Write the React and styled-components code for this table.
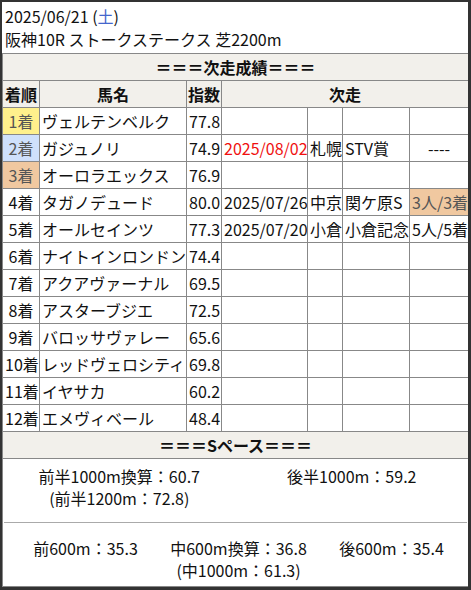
import React from 'react';
import styled, { createGlobalStyle } from 'styled-components';

const Global = createGlobalStyle`
  html, body {
    margin: 0;
    padding: 0;
    background: #333;
  }
  body {
    font-family: "Noto Sans CJK JP", "Noto Sans", sans-serif;
    font-size: 16px;
    color: #111;
  }
`;

const Frame = styled.div`
  padding: 2px 3px 3px 2px;
  width: 471px;
  height: 590px;
  box-sizing: border-box;
`;

const Card = styled.div`
  background: #fff;
  height: 100%;
  overflow: hidden;
`;

const Header = styled.div`
  padding: 3px 3px 2px;
  line-height: 23px;
`;

const Sat = styled.span`
  color: #4466cc;
`;

const Table = styled.table`
  width: 466px;
  border-collapse: collapse;
  table-layout: fixed;
  border: 1px solid #888;
`;

const Cell = styled.td`
  border: 1px solid #888;
  height: 26px;
  padding: 0 2px;
  line-height: 24px;
  white-space: nowrap;
  overflow: hidden;
  text-align: ${p => p.$align || 'left'};
  background: ${p => p.$bg || 'transparent'};
  color: ${p => (p.$red ? '#f01010' : p.$bg ? '#555' : '#111')};
`;

const HeadCell = styled.th`
  border: 1px solid #888;
  height: 26px;
  padding: 0;
  line-height: 24px;
  white-space: nowrap;
  background: #f2f0eb;
  font-weight: 700;
  text-align: center;
`;

const PaceCell = styled.td`
  border: 1px solid #888;
  padding: 0;
  vertical-align: top;
`;

const PaceRow = styled.div`
  display: grid;
  grid-template-columns: repeat(${p => p.$cols}, 1fr);
  line-height: 22px;
  text-align: center;
  padding: ${p => p.$pad};
`;

const Divider = styled.div`
  border-top: 1px solid #aaa;
  margin: 0 1px;
`;

const PLACE_BG = {
  1: '#fff08c',
  2: '#cfe0fb',
  3: '#f0c8a0',
};

const rows = [
  { n: 1, name: 'ヴェルテンベルク', idx: '77.8' },
  { n: 2, name: 'ガジュノリ', idx: '74.9', next: ['2025/08/02', '札幌', 'STV賞', '----'], red: true },
  { n: 3, name: 'オーロラエックス', idx: '76.9' },
  { n: 4, name: 'タガノデュード', idx: '80.0', next: ['2025/07/26', '中京', '関ケ原S', '3人/3着'], resBg: PLACE_BG[3] },
  { n: 5, name: 'オールセインツ', idx: '77.3', next: ['2025/07/20', '小倉', '小倉記念', '5人/5着'] },
  { n: 6, name: 'ナイトインロンドン', idx: '74.4' },
  { n: 7, name: 'アクアヴァーナル', idx: '69.5' },
  { n: 8, name: 'アスターブジエ', idx: '72.5' },
  { n: 9, name: 'バロッサヴァレー', idx: '65.6' },
  { n: 10, name: 'レッドヴェロシティ', idx: '69.8' },
  { n: 11, name: 'イヤサカ', idx: '60.2' },
  { n: 12, name: 'エメヴィベール', idx: '48.4' },
];

const ResultRow = ({ r }) => {
  const next = r.next || ['', '', '', ''];
  return (
    <tr>
      <Cell $align="center" $bg={PLACE_BG[r.n]}>{r.n}着</Cell>
      <Cell>{r.name}</Cell>
      <Cell>{r.idx}</Cell>
      <Cell $red={r.red}>{next[0]}</Cell>
      <Cell>{next[1]}</Cell>
      <Cell>{next[2]}</Cell>
      <Cell $align={next[3] === '----' ? 'center' : 'left'} $bg={r.resBg}>{next[3]}</Cell>
    </tr>
  );
};

export default function App() {
  return (
    <Frame>
      <Global />
      <Card>
        <Header>
          <div>2025/06/21 (<Sat>土</Sat>)</div>
          <div>阪神10R ストークステークス 芝2200m</div>
        </Header>
        <Table>
          <colgroup>
            <col style={{ width: 37 }} />
            <col style={{ width: 147 }} />
            <col style={{ width: 35 }} />
            <col style={{ width: 86 }} />
            <col style={{ width: 35 }} />
            <col style={{ width: 67 }} />
            <col style={{ width: 59 }} />
          </colgroup>
          <tbody>
            <tr><HeadCell colSpan={7}>＝＝＝次走成績＝＝＝</HeadCell></tr>
            <tr>
              <HeadCell>着順</HeadCell>
              <HeadCell>馬名</HeadCell>
              <HeadCell>指数</HeadCell>
              <HeadCell colSpan={4}>次走</HeadCell>
            </tr>
            {rows.map(r => <ResultRow key={r.n} r={r} />)}
            <tr><HeadCell colSpan={7}>＝＝＝Sペース＝＝＝</HeadCell></tr>
            <tr>
              <PaceCell colSpan={7}>
                <PaceRow $cols={2} $pad="6px 0 13px">
                  <div>前半1000m換算：60.7<br />(前半1200m：72.8)</div>
                  <div>後半1000m：59.2</div>
                </PaceRow>
                <Divider />
                <PaceRow $cols={3} $pad="14px 0 5px 6px">
                  <div>前600m：35.3</div>
                  <div>中600m換算：36.8<br />(中1000m：61.3)</div>
                  <div>後600m：35.4</div>
                </PaceRow>
              </PaceCell>
            </tr>
          </tbody>
        </Table>
      </Card>
    </Frame>
  );
}
